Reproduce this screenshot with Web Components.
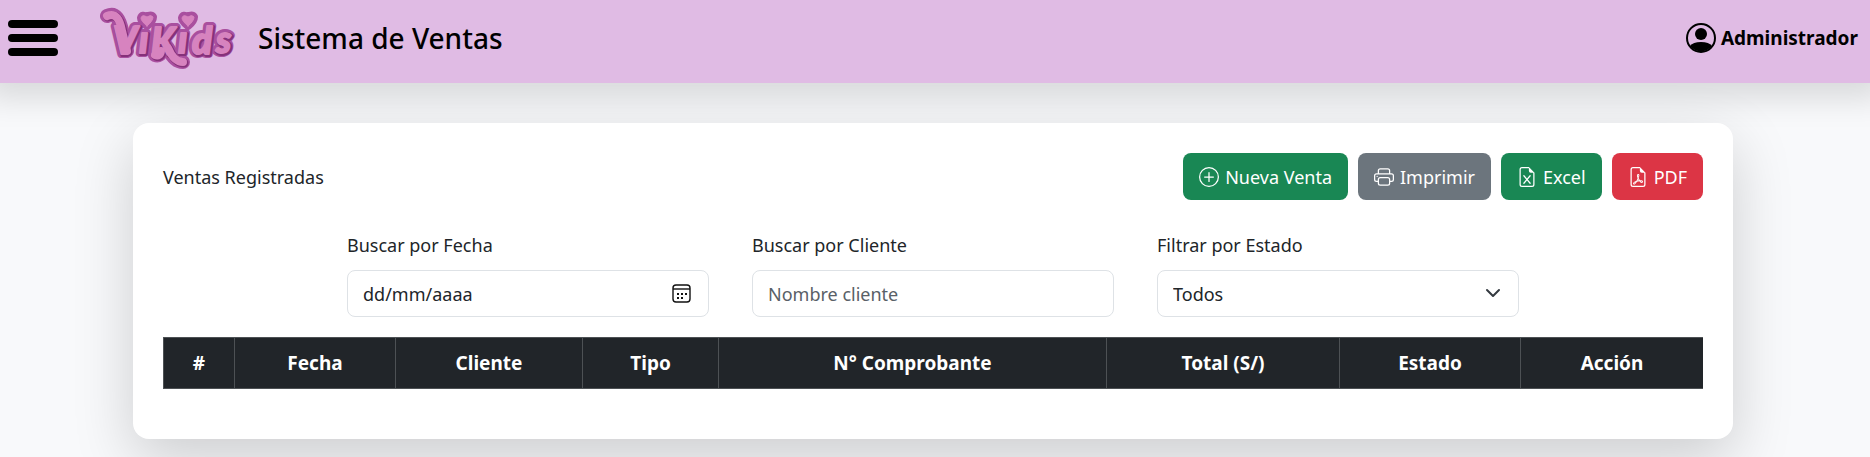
<!DOCTYPE html>
<html lang="es">
<head>
<meta charset="utf-8">
<meta name="viewport" content="width=device-width, initial-scale=1">
<title>Sistema de Ventas</title>
<style>
  body {
    margin: 0;
    background: #f8f9fb;
    color: #212529;
    font-family: "Noto Sans", "Open Sans", sans-serif;
    font-size: 18px;
    line-height: 30px;
  }
  main { padding: 40px 4px 40px 0; }
</style>
</head>
<body>
<app-header>
  <span slot="title">Sistema de Ventas</span>
  <span slot="user">Administrador</span>
</app-header>
<main>
  <app-card>
    <span slot="heading">Ventas Registradas</span>
    <action-button slot="actions" icon="plus" variant="success">Nueva Venta</action-button>
    <action-button slot="actions" icon="printer" variant="secondary">Imprimir</action-button>
    <action-button slot="actions" icon="excel" variant="success">Excel</action-button>
    <action-button slot="actions" icon="pdf" variant="danger">PDF</action-button>
    <filter-bar>
      <date-field label="Buscar por Fecha" placeholder="dd/mm/aaaa"></date-field>
      <text-field label="Buscar por Cliente" placeholder="Nombre cliente"></text-field>
      <select-field label="Filtrar por Estado" options="Todos"></select-field>
    </filter-bar>
    <sales-table></sales-table>
  </app-card>
</main>

<script>
const define = (name, markup, setup) => {
  const template = document.createElement('template');
  template.innerHTML = markup;
  customElements.define(name, class extends HTMLElement {
    constructor() {
      super();
      this.attachShadow({ mode: 'open' }).append(template.content.cloneNode(true));
    }
    connectedCallback() {
      if (setup) setup(this, this.shadowRoot);
    }
  });
};

const page = '<path d="M14 14V4.5L9.5 0H4a2 2 0 0 0-2 2v12a2 2 0 0 0 2 2h8a2 2 0 0 0 2-2M9.5 3A1.5 1.5 0 0 0 11 4.5h2V14a1 1 0 0 1-1 1H4a1 1 0 0 1-1-1V2a1 1 0 0 1 1-1h5.5z"/>';
const icons = {
  plus: '<path d="M8 15A7 7 0 1 1 8 1a7 7 0 0 1 0 14m0 1A8 8 0 1 0 8 0a8 8 0 0 0 0 16"/><path d="M8 4a.5.5 0 0 1 .5.5v3h3a.5.5 0 0 1 0 1h-3v3a.5.5 0 0 1-1 0v-3h-3a.5.5 0 0 1 0-1h3v-3A.5.5 0 0 1 8 4"/>',
  printer: '<path d="M2.5 8a.5.5 0 1 0 0-1 .5.5 0 0 0 0 1"/><path d="M5 1a2 2 0 0 0-2 2v2H2a2 2 0 0 0-2 2v3a2 2 0 0 0 2 2h1v1a2 2 0 0 0 2 2h6a2 2 0 0 0 2-2v-1h1a2 2 0 0 0 2-2V7a2 2 0 0 0-2-2h-1V3a2 2 0 0 0-2-2zM4 3a1 1 0 0 1 1-1h6a1 1 0 0 1 1 1v2H4zm1 5a2 2 0 0 0-2 2v1H2a1 1 0 0 1-1-1V7a1 1 0 0 1 1-1h12a1 1 0 0 1 1 1v3a1 1 0 0 1-1 1h-1v-1a2 2 0 0 0-2-2zm7 2v3a1 1 0 0 1-1 1H5a1 1 0 0 1-1-1v-3a1 1 0 0 1 1-1h6a1 1 0 0 1 1 1"/>',
  excel: '<path d="M5.884 6.68a.5.5 0 1 0-.768.64L7.349 10l-2.233 2.68a.5.5 0 0 0 .768.64L8 10.781l2.116 2.54a.5.5 0 0 0 .768-.641L8.651 10l2.233-2.68a.5.5 0 0 0-.768-.64L8 9.219l-2.116-2.54z"/>' + page,
  pdf: page + '<path d="M4.603 14.087a.8.8 0 0 1-.438-.42c-.195-.388-.13-.776.08-1.102.198-.307.526-.568.897-.787a7.7 7.7 0 0 1 1.482-.645 20 20 0 0 0 1.062-2.227 7.3 7.3 0 0 1-.43-1.295c-.086-.4-.119-.796-.046-1.136.075-.354.274-.672.65-.823.192-.077.4-.12.602-.077a.7.7 0 0 1 .477.365c.088.164.12.356.127.538.007.188-.012.396-.047.614-.084.51-.27 1.134-.52 1.794a11 11 0 0 0 .98 1.686 5.8 5.8 0 0 1 1.334.05c.364.066.734.195.96.465.12.144.193.32.2.518.007.192-.047.382-.138.563a1.04 1.04 0 0 1-.354.416.86.86 0 0 1-.51.138c-.331-.014-.654-.196-.933-.417a5.7 5.7 0 0 1-.911-.95 11.7 11.7 0 0 0-1.997.406 11.3 11.3 0 0 1-1.02 1.51c-.292.35-.609.656-.927.787a.8.8 0 0 1-.58.029m1.379-1.901q-.25.115-.459.238c-.328.194-.541.383-.647.547-.094.145-.096.25-.04.361q.016.032.026.044l.035-.012c.137-.056.355-.235.635-.572a8 8 0 0 0 .45-.606m1.64-1.33a13 13 0 0 1 1.01-.193 12 12 0 0 1-.51-.858 21 21 0 0 1-.5 1.05zm2.446.45q.226.245.435.41c.24.19.407.253.498.256a.1.1 0 0 0 .07-.015.3.3 0 0 0 .094-.125.44.44 0 0 0 .059-.2.1.1 0 0 0-.026-.063c-.052-.062-.2-.152-.518-.209a4 4 0 0 0-.612-.053zM8.078 7.8a7 7 0 0 0 .2-.828q.046-.282.038-.465a.6.6 0 0 0-.032-.198.5.5 0 0 0-.145.04c-.087.035-.158.106-.196.283-.04.192-.03.469.046.822q.036.167.09.346z"/>'
};

/* Brand mark: rim, shade and face layers of the same lettering */
define('brand-logo', `
  <style>
    :host { display: block; }
    svg { display: block; width: 136px; height: 64px; }
    text { font: italic 900 37px Lato, sans-serif; }
    .rim { fill: #a94f9f; stroke: #a94f9f; }
    .shade { fill: #85317a; stroke: #85317a; }
    .face { fill: #d783bf; stroke: #d783bf; }
    g { stroke-linejoin: round; stroke-linecap: round; }
    .line { fill: none; }
  </style>
  <svg viewBox="100 5 136 64" role="img" aria-label="Vikids">
    <defs>
      <g id="swash">
        <path class="line" d="M107 15C116 11 120 19 122 30L127 50"/>
        <path class="line" d="M168 47Q174 61 183 61"/>
        <path class="line" d="M161 50Q160 56 155 54"/>
      </g>
      <path id="heart" d="M0 11Q-6 6-6 3Q-5-1 0 2Q4-1 6 2Q6 6 0 11Z"/>
    </defs>
    <g class="rim" stroke-width="8">
      <g stroke-width="14"><use href="#swash"/></g>
      <use href="#heart" x="147" y="14"/><use href="#heart" x="188" y="14"/>
      <text aria-hidden="true" x="113 139 151 178 192 216" y="53 52 54 52 53 52">VıKıds</text>
    </g>
    <g class="shade" stroke-width="4">
      <g stroke-width="9"><use href="#swash" x="1" y="1"/></g>
      <text aria-hidden="true" x="114 140 152 179 193 217" y="54 53 55 53 54 53">VıKıds</text>
    </g>
    <g class="face" stroke-width="2">
      <g stroke-width="8"><use href="#swash"/></g>
      <g stroke-width="1"><use href="#heart" x="147" y="14"/><use href="#heart" x="188" y="14"/></g>
      <text x="113 139 151 178 192 216" y="53 52 54 52 53 52">VıKıds</text>
    </g>
  </svg>`);

define('app-header', `
  <style>
    :host { display: block; position: relative; background: #e0bbe4; color: #000; box-shadow: 0 0 30px 15px rgba(0,0,0,.13); }
    header { display: flex; align-items: center; min-height: 75px; padding: 0 12px 8px 8px; }
    .menu { display: grid; gap: 6px; width: 50px; margin: 0 42px 0 0; padding: 0; border: 0; background: none; cursor: pointer; }
    .menu i { height: 8px; border-radius: 4px; background: #000; }
    h1 { margin: 0 auto 0 22px; font-size: 28px; line-height: 38px; font-weight: 500; }
    .user { display: flex; align-items: center; gap: 5px; color: inherit; text-decoration: none; font-size: 19px; font-weight: 700; }
    .user svg { width: 30px; height: 30px; }
  </style>
  <header>
    <button class="menu" type="button" aria-label="Menú"><i></i><i></i><i></i></button>
    <brand-logo></brand-logo>
    <h1><slot name="title"></slot></h1>
    <a class="user" href="#">
      <svg viewBox="0 0 30 30" aria-hidden="true"><circle cx="15" cy="15" r="14" fill="none" stroke="#000" stroke-width="2"/><circle cx="15" cy="11" r="6"/><path d="M4 23Q7 19 15 19T26 23A14 14 0 0 1 4 23Z"/></svg>
      <slot name="user"></slot>
    </a>
  </header>`);

define('app-card', `
  <style>
    :host { display: block; max-width: 1600px; margin: 0 auto; box-sizing: border-box; padding: 30px 30px 50px; border-radius: 16px; background: #fff; position: relative; box-shadow: 0 20px 60px rgba(0,0,0,.175); }
    .top { display: flex; flex-wrap: wrap; justify-content: space-between; align-items: center; gap: 10px; margin-bottom: 30px; }
    h2 { margin: 0; font-size: 18px; font-weight: 400; }
    .actions { display: flex; flex-wrap: wrap; gap: 10px; }
  </style>
  <div class="top"><h2><slot name="heading"></slot></h2><div class="actions"><slot name="actions"></slot></div></div>
  <slot></slot>`);

define('action-button', `
  <style>
    :host { display: block; --tone: #198754; }
    :host([variant="secondary"]) { --tone: #6c757d; }
    :host([variant="danger"]) { --tone: #dc3545; }
    button { display: flex; align-items: center; gap: 6px; height: 47px; padding: 0 16px; border: 0; border-radius: 8px; background: var(--tone); color: #fff; font: inherit; cursor: pointer; }
    svg { width: 20px; height: 20px; fill: currentColor; }
  </style>
  <button type="button"><svg viewBox="0 0 16 16" aria-hidden="true"></svg><span><slot></slot></span></button>`,
  (host, root) => { root.querySelector('svg').innerHTML = icons[host.getAttribute('icon')]; });

define('filter-bar', `
  <style>
    :host { display: grid; grid-template-columns: repeat(auto-fit, minmax(260px, 1fr)); gap: 20px 43px; max-width: 1172px; margin: 0 auto 20px; }
  </style>
  <slot></slot>`);

const fieldStyle = `
  <style>
    :host { display: block; }
    label { display: block; margin-bottom: 10px; }
    .box { display: grid; align-items: center; }
    .box > * { grid-row: 1; grid-column: 1; }
    input, select { box-sizing: border-box; width: 100%; height: 47px; padding: 0 15px; border: 1px solid #dee2e6; border-radius: 8px; background: #fff; color: #212529; font: inherit; appearance: none; }
    input::placeholder { color: #596067; opacity: 1; }
    .date::placeholder { color: #212529; }
    button { justify-self: end; display: flex; margin-right: 18px; padding: 0; border: 0; background: none; cursor: pointer; }
    .chevron { justify-self: end; margin-right: 16px; width: 20px; height: 20px; pointer-events: none; }
  </style>`;
const setupInput = (host, root) => {
  root.querySelector('label').textContent = host.getAttribute('label');
  root.querySelector('input').placeholder = host.getAttribute('placeholder');
};

define('text-field', fieldStyle + `<label for="control"></label><div class="box"><input id="control" type="text"></div>`, setupInput);

define('date-field', fieldStyle + `
  <label for="control"></label>
  <div class="box">
    <input id="control" class="date" type="text" inputmode="numeric">
    <button type="button" aria-label="Abrir calendario">
      <svg width="19" height="19" viewBox="0 0 19 19" fill="none" stroke="#111" aria-hidden="true"><rect x="1" y="1" width="17" height="17" rx="3" stroke-width="1.4"/><path d="M1 5H18" stroke-width="1.4"/><path d="M5 10H7M9 10H11M13 10H15M5 14H7M9 14H11" stroke-width="2"/></svg>
    </button>
  </div>`, setupInput);

define('select-field', fieldStyle + `
  <label for="control"></label>
  <div class="box">
    <select id="control"></select>
    <svg class="chevron" viewBox="0 0 20 20" aria-hidden="true"><path d="m4 6 6 6 6-6" fill="none" stroke="#343a40" stroke-width="2" stroke-linecap="round" stroke-linejoin="round"/></svg>
  </div>`, (host, root) => {
    root.querySelector('label').textContent = host.getAttribute('label');
    root.querySelector('select').replaceChildren(...host.getAttribute('options').split(',').map(text => new Option(text)));
  });

define('sales-table', `
  <style>
    :host { display: block; overflow-x: auto; }
    table { width: 100%; border-collapse: collapse; table-layout: fixed; background: #212529; color: #fff; }
    th { height: 50px; padding: 0; border: 1px solid #4d5154; font-size: 19px; font-weight: 700; text-align: center; }
  </style>
  <table>
    <colgroup><col style="width:71px"><col style="width:161px"><col style="width:187px"><col style="width:136px"><col style="width:388px"><col style="width:233px"><col style="width:181px"><col style="width:183px"></colgroup>
    <thead><tr><th scope="col">#</th><th scope="col">Fecha</th><th scope="col">Cliente</th><th scope="col">Tipo</th><th scope="col">N° Comprobante</th><th scope="col">Total (S/)</th><th scope="col">Estado</th><th scope="col">Acción</th></tr></thead>
  </table>`);
</script>
</body>
</html>
